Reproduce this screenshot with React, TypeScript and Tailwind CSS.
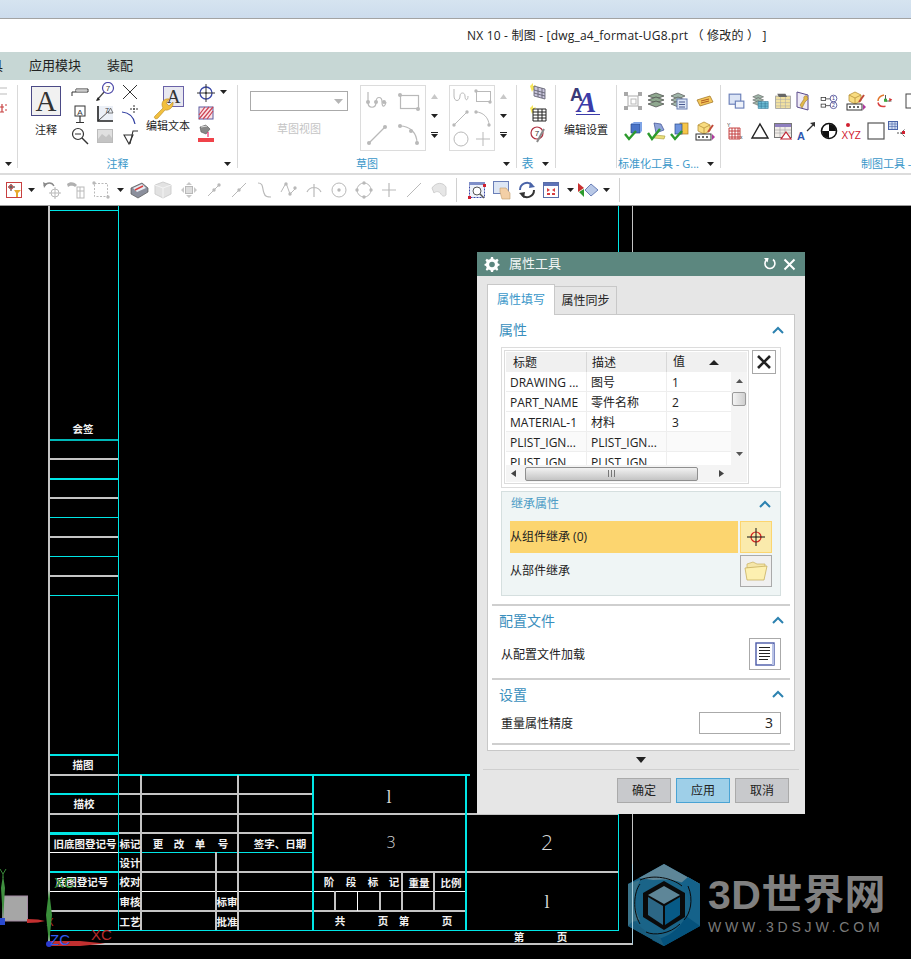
import React from 'react';

type Kids = { children?: React.ReactNode };

// --- small helpers ---
const Ic = ({ w = 20, h = 20, vb, children }: Kids & { w?: number; h?: number; vb?: string }) => (
  <svg width={w} height={h} viewBox={vb ?? `0 0 ${w} ${h}`} className="block shrink-0">
    {children}
  </svg>
);

const Drop = () => (
  <svg width="7" height="4" viewBox="0 0 7 4" className="block shrink-0">
    <polygon points="0,0 7,0 3.5,4" fill="#222" />
  </svg>
);

const Chevron = () => (
  <svg width="12" height="8" viewBox="0 0 12 8" className="block">
    <path d="M1 7 L6 2 L11 7" fill="none" stroke="#2c82b0" strokeWidth="2" />
  </svg>
);

const GRAY = '#b9b9b9';

// --- ribbon icons ---
const BigA = () => (
  <div className="w-[30px] h-[30px] border border-[#4b4a86] bg-[#f1f1f1] flex items-center justify-center font-['Liberation_Serif',serif] text-[29px] leading-none text-[#333]">
    A
  </div>
);
const LeaderNote = () => (
  <Ic>
    <path d="M2 14 V10 H18 V7 H6 V10" fill="none" stroke="#333" strokeWidth="1" />
    <path d="M6 8.5 H17" stroke="#ccc" strokeWidth="2" />
  </Ic>
);
const BalloonSeven = () => (
  <Ic>
    <path d="M2 18 L10 9" stroke="#444" strokeWidth="1.2" />
    <polygon points="1,19 3,15 5,18" fill="#222" />
    <circle cx="13" cy="6" r="5.5" fill="#fff" stroke="#4d48a8" strokeWidth="1.2" />
    <text x="13" y="9" fontSize="8" textAnchor="middle" fill="#333" fontFamily="Liberation Sans">7</text>
  </Ic>
);
const Cross = () => (
  <Ic>
    <path d="M3 3 L17 17 M17 3 L3 17" stroke="#333" strokeWidth="1" />
  </Ic>
);
const SignA = () => (
  <Ic>
    <rect x="5" y="2" width="10" height="10" fill="#fff" stroke="#333" />
    <text x="10" y="10.5" fontSize="8" textAnchor="middle" fill="#333" fontFamily="Liberation Sans">A</text>
    <path d="M10 12 V18 M6 18.5 H14" stroke="#333" strokeWidth="1.2" />
  </Ic>
);
const Slope = () => (
  <Ic>
    <rect x="2" y="2" width="16" height="16" fill="#dfe6f2" opacity="0.6" />
    <path d="M3 2 V17 H18" fill="none" stroke="#222" strokeWidth="1.6" />
    <path d="M4 16 L14 7" stroke="#555" strokeWidth="1" />
    <text x="10" y="9" fontSize="7" fill="#333" fontFamily="Liberation Sans">7</text>
    <polygon points="13,9 18,9 15.5,4" fill="none" stroke="#555" strokeWidth="0.8" />
  </Ic>
);
const Fillet = () => (
  <Ic>
    <path d="M2 8 Q13 9 15 20" fill="none" stroke="#2c3a9e" strokeWidth="1.2" />
    <path d="M14 1 V9 M10 5 H19" stroke="#333" strokeWidth="1" strokeDasharray="2 1" />
  </Ic>
);
const Loupe = () => (
  <Ic>
    <circle cx="8" cy="8" r="5.5" fill="#fff" stroke="#333" strokeWidth="1.2" />
    <path d="M5 8 H11" stroke="#333" />
    <path d="M12 12 L18 18" stroke="#333" strokeWidth="1.4" />
  </Ic>
);
const ImageGray = () => (
  <Ic>
    <rect x="2.5" y="3.5" width="15" height="13" fill="#e0e0e0" stroke="#bbb" />
    <path d="M3 13 L7 8 L11 11 L14 8 L17 12 V16 H3Z" fill="#c4c4c4" />
  </Ic>
);
const Surface = () => (
  <Ic>
    <path d="M4 9 H13 L9 18 Z" fill="none" stroke="#333" strokeWidth="1.1" />
    <path d="M10 18 L13 5 H18" fill="none" stroke="#333" strokeWidth="1.1" />
  </Ic>
);
const EditText = () => (
  <Ic w={44} h={34}>
    <rect x="17.5" y="0.5" width="20" height="20" fill="#e8e8f0" stroke="#6a62a8" />
    <text x="27.5" y="17" fontSize="19" textAnchor="middle" fill="#333" fontFamily="Liberation Serif">A</text>
    <path d="M9 30 L17 22 C14 17 18 12 23 13 L20 17 L23 20 L27 16 C28 21 23 25 19 24 L12 32 C10 34 7 32 9 30Z" fill="#f2c03e" stroke="#b98a24" strokeWidth="0.6" />
  </Ic>
);
const Target = () => (
  <Ic>
    <circle cx="10" cy="10" r="6" fill="none" stroke="#3a48a8" strokeWidth="1.3" />
    <path d="M10 1 V19 M1 10 H19" stroke="#333" strokeWidth="1" />
    <circle cx="10" cy="10" r="1" fill="#333" />
  </Ic>
);
const Hatch = () => (
  <Ic w={16} h={14}>
    <rect x="1" y="1" width="14" height="12" fill="#fbe3e6" stroke="#5a5aa0" />
    <path d="M1 9 L7 1 M1 13 L11 1 M5 13 L15 1 M9 13 L15 5" stroke="#cc4455" strokeWidth="1.2" />
  </Ic>
);
const Pour = () => (
  <Ic w={17} h={18}>
    <path d="M2 3 L8 1 L12 5 L8 10 L3 8Z" fill="#888" stroke="#555" strokeWidth="0.6" />
    <path d="M3 3 L9 2" stroke="#ddd" />
    <path d="M10 8 V13" stroke="#e05" strokeWidth="1" />
    <rect x="0" y="14" width="16" height="4" fill="#f0434a" />
  </Ic>
);
const GalleryCurve = ({ kind }: { kind: 'studio' | 'rect' | 'line' | 'arc' }) => (
  <Ic w={24} h={24}>
    <g fill="none" stroke={GRAY} strokeWidth="1.2">
      {kind === 'studio' && <path d="M3 2 V12 C3 19 11 19 11 12 C11 6 17 6 17 12 C17 18 20 17 21 12" />}
      {kind === 'rect' && <rect x="3.5" y="5.5" width="18" height="13" />}
      {kind === 'line' && <path d="M4 21 L20 5" />}
      {kind === 'arc' && <path d="M3 4 C13 4 20 11 20 21" />}
    </g>
    <g fill={GRAY}>
      {kind === 'studio' && (
        <>
          <circle cx="3" cy="12" r="2" />
          <circle cx="11" cy="12" r="2" />
          <circle cx="19" cy="12" r="2" />
        </>
      )}
      {kind === 'rect' && (
        <>
          <circle cx="3" cy="5" r="2" />
          <circle cx="21" cy="19" r="2" />
        </>
      )}
      {kind === 'line' && (
        <>
          <circle cx="4" cy="21" r="2" />
          <circle cx="20" cy="5" r="2" />
        </>
      )}
      {kind === 'arc' && (
        <>
          <circle cx="3" cy="4" r="2" />
          <circle cx="14" cy="9" r="2" />
          <circle cx="20" cy="21" r="2" />
        </>
      )}
    </g>
  </Ic>
);
const TableNew = ({ n }: { n: 0 | 1 }) => (
  <Ic w={18} h={18}>
    <polygon points="1,4 4,1 4,4 7,3 5,6 7,9 4,8 3,10 2,7" fill="#f7e65a" />
    {n === 0 ? (
      <path d="M5 4 L16 7 V17 L5 14Z M5 8 L16 11 M5 11 L16 14 M9 5 V15 M13 6 V16" fill="#c9c5dc" stroke="#5a5a6a" strokeWidth="0.8" />
    ) : (
      <path d="M4 5 H17 V17 H4Z M4 8 H17 M4 11 H17 M4 14 H17 M9 5 V17 M13 5 V17" fill="#fff" stroke="#222" strokeWidth="1" />
    )}
  </Ic>
);
const BalloonPen = () => (
  <Ic w={18} h={18}>
    <circle cx="8" cy="7" r="6" fill="#fff" stroke="#b03040" strokeWidth="1.2" />
    <text x="8" y="10" fontSize="8" textAnchor="middle" fill="#333" fontFamily="Liberation Sans">7</text>
    <path d="M15 3 L8 16" stroke="#8a8a8a" strokeWidth="2" />
  </Ic>
);
const DoubleA = () => (
  <div className="relative w-[32px] h-[32px] font-['Liberation_Serif',serif]">
    <span className="absolute left-0 top-0 text-[18px] leading-none font-bold font-['Liberation_Sans',sans-serif] text-[#3a3a78]">A</span>
    <span className="absolute left-[7px] top-[2px] text-[29px] leading-none italic font-bold text-[#3b3ba8]">A</span>
    <span className="absolute left-[6px] top-[28px] w-[24px] h-[1px] bg-[#3b3ba8]" />
  </div>
);

// --- standard tool icons (coloured) ---
const Stack = ({ c = '#8fa88f' }: { c?: string }) => (
  <Ic>
    {[5, 9, 13].map((y) => (
      <path key={y} d={`M10 ${y - 3} L18 ${y} L10 ${y + 3} L2 ${y}Z`} fill={c} stroke="#444" strokeWidth="0.7" />
    ))}
  </Ic>
);
const StackList = () => (
  <Ic>
    {[5, 9, 13].map((y) => (
      <path key={y} d={`M9 ${y - 3} L16 ${y} L9 ${y + 3} L2 ${y}Z`} fill="#9fb5a8" stroke="#555" strokeWidth="0.7" />
    ))}
    <rect x="8" y="8" width="10" height="10" fill="#dbe5f5" stroke="#6a7fb0" />
    <path d="M10 11 H16 M10 13.5 H16 M10 16 H16" stroke="#4a5a90" />
  </Ic>
);
const SelectCube = () => (
  <Ic>
    <rect x="5" y="5" width="10" height="10" fill="none" stroke={GRAY} strokeWidth="1.2" />
    <rect x="8" y="8" width="5" height="5" fill="none" stroke={GRAY} />
    {[3, 17].map((x) => [3, 17].map((y) => <rect key={`${x}-${y}`} x={x - 2} y={y - 2} width="4" height="4" fill="#a8a8a8" />))}
  </Ic>
);
const Tag = () => (
  <Ic>
    <path d="M2 9 L15 5 L18 11 L5 15Z" fill="#f3c65a" stroke="#a67a2a" strokeWidth="0.8" />
    <path d="M6 10 L14 8 M6 12 L14 10" stroke="#b05a20" />
  </Ic>
);
const BlueCheck = ({ c = '#4a74c8' }: { c?: string }) => (
  <Ic>
    <path d="M8 3 L17 3 L17 12 L8 12Z" fill={c} stroke="#2a4a8a" strokeWidth="0.7" />
    <path d="M8 3 L11 1 H19 L17 3Z M17 3 L19 1 V10 L17 12Z" fill="#7fa4e6" />
    <path d="M2 13 L6 18 L13 10" fill="none" stroke="#2c9a2c" strokeWidth="2.4" />
  </Ic>
);
const WrenchCheck = () => (
  <Ic>
    <path d="M8 2 L15 3 L18 9 L10 12Z" fill="#8fa4d8" stroke="#3a4a90" strokeWidth="0.7" />
    <path d="M9 14 L19 15 L18 18 L8 17Z" fill="#eadf7a" stroke="#a89a3a" strokeWidth="0.6" />
    <path d="M2 12 L6 18 L14 8" fill="none" stroke="#2c9a2c" strokeWidth="2.4" />
  </Ic>
);
const YellowCheck = () => (
  <Ic>
    <rect x="11" y="2" width="8" height="11" fill="#f6c64a" stroke="#a87a20" strokeWidth="0.7" />
    <rect x="6" y="3" width="7" height="10" fill="#6f94de" stroke="#2a4a8a" strokeWidth="0.7" />
    <path d="M2 13 L6 18 L13 10" fill="none" stroke="#2c9a2c" strokeWidth="2.4" />
  </Ic>
);
const CubePencil = () => (
  <Ic>
    <path d="M3 4 L9 1 L15 4 V10 L9 13 L3 10Z" fill="#f8dc80" stroke="#b8923a" strokeWidth="0.8" />
    <path d="M3 4 L9 7 L15 4 M9 7 V13" fill="none" stroke="#b8923a" strokeWidth="0.8" />
    <path d="M18 4 L13 11" stroke="#c04a3a" strokeWidth="2" />
    <rect x="1" y="13" width="15" height="6" fill="#fff" stroke="#333" />
    <path d="M3 16 H5 M7 16 H9 M11 16 H13" stroke="#333" strokeWidth="1.6" />
    <polygon points="17,13 20,16 17,19" fill="#b03aa0" />
  </Ic>
);
const TwoViews = () => (
  <Ic w={17} h={17} vb="0 0 22 22">
    <rect x="1.5" y="1.5" width="15" height="13" fill="#dbe4f5" stroke="#6a7fb8" strokeWidth="1.5" />
    <rect x="9.5" y="10.5" width="11" height="9" fill="#eef2fa" stroke="#6a7fb8" strokeWidth="1.5" />
  </Ic>
);
const StackTable = () => (
  <Ic w={17} h={17} vb="0 0 22 22">
    {[5, 9, 13].map((y) => (
      <path key={y} d={`M8 ${y - 3} L15 ${y} L8 ${y + 3} L1 ${y}Z`} fill="#9fb5a8" stroke="#555" strokeWidth="0.7" />
    ))}
    <path d="M8 11 H21 V20 H8Z M8 14 H21 M8 17 H21 M12 11 V20 M17 11 V20" fill="#6fc0d8" stroke="#2f6f90" strokeWidth="0.7" />
  </Ic>
);
const TableYellow = () => (
  <Ic w={18} h={18} vb="0 0 22 22">
    <rect x="2" y="5" width="18" height="15" fill="#f3e2a0" stroke="#999" />
    <path d="M2 9 H20 M2 13 H20 M2 17 H20 M8 5 V20 M14 5 V20" stroke="#aaa" strokeWidth="0.7" />
    <path d="M4 2 H14 L16 6 H6Z" fill="#666" />
  </Ic>
);
const BookWrench = () => (
  <Ic>
    <path d="M3 1 L14 4 V19 L3 16Z" fill="#efeaf7" stroke="#5a4a8a" />
    <path d="M6 14 L10 8 C9 6 11 4 13 5 L14 8 L11 11 L8 17Z" fill="#e2b94a" stroke="#8a6a2a" strokeWidth="0.5" />
  </Ic>
);
const NumberedNodes = () => (
  <Ic w={18} h={17} vb="0 0 24 22">
    <g fill="none" stroke="#333">
      <rect x="1.5" y="5.5" width="6" height="4" />
      <rect x="1.5" y="14.5" width="6" height="4" />
      <path d="M8 7.5 H14 M8 16.5 H14" />
      <circle cx="18" cy="7" r="4.5" stroke="#3a3a8a" />
      <circle cx="18" cy="16" r="4.5" stroke="#3a3a8a" />
    </g>
    <text x="18" y="9.5" fontSize="7" textAnchor="middle" fill="#3a3a8a" fontFamily="Liberation Sans">1</text>
    <text x="18" y="18.5" fontSize="7" textAnchor="middle" fill="#3a3a8a" fontFamily="Liberation Sans">2</text>
  </Ic>
);
const Triad = () => (
  <Ic w={18} h={18} vb="0 0 24 24">
    <path d="M4 12 C4 7 8 5 12 4" fill="none" stroke="#e2762c" strokeWidth="2" />
    <path d="M4 14 C5 19 9 20 14 19" fill="none" stroke="#d94040" strokeWidth="2" />
    <path d="M14 12 V4 M14 12 H22" stroke="#222" strokeWidth="1" />
    <rect x="12" y="9" width="4" height="4" fill="#3aa83a" />
    <polygon points="19,8 23,10 19,13" fill="#d03030" />
  </Ic>
);
const TableAxis = () => (
  <Ic w={18} h={20}>
    <text x="0" y="6" fontSize="5" fill="#333" fontFamily="Liberation Sans">Y</text>
    <path d="M2 7 H13 V18 H2Z M2 10 H13 M2 13 H13 M2 16 H13 M5 7 V18 M8 7 V18 M11 7 V18" fill="none" stroke="#c03030" strokeWidth="0.9" />
    <text x="13" y="18" fontSize="5" fill="#333" fontFamily="Liberation Sans">x</text>
  </Ic>
);
const Triangle = () => (
  <Ic>
    <polygon points="10,3 18,17 2,17" fill="none" stroke="#222" strokeWidth="1.4" />
  </Ic>
);
const TableDelta = () => (
  <Ic>
    <rect x="1.5" y="2.5" width="17" height="14" fill="#f1ede8" stroke="#777" />
    <rect x="2" y="3" width="16" height="3" fill="#8f7fbf" />
    <path d="M2 9 H18 M2 12 H18 M7 6 V16 M12 6 V16" stroke="#aaa" strokeWidth="0.7" />
    <polygon points="13,11 18,18 8,18" fill="#fff" stroke="#c02030" strokeWidth="1.2" />
  </Ic>
);
const ArrowA = () => (
  <Ic>
    <text x="1" y="19" fontSize="11" fontWeight="700" fill="#2f58b0" fontFamily="Liberation Sans">A</text>
    <path d="M11 10 L18 3" stroke="#333" strokeWidth="1.3" />
    <polygon points="19,1 19,6 14,2" fill="#333" />
  </Ic>
);
const Centroid = () => (
  <Ic>
    <circle cx="10" cy="10" r="7.5" fill="#fff" stroke="#111" strokeWidth="1.6" />
    <path d="M10 10 V3 A7 7 0 0 1 17 10Z M10 10 V17 A7 7 0 0 1 3 10Z" fill="#111" />
  </Ic>
);
const Xyz = () => (
  <Ic w={24} h={20}>
    <circle cx="7" cy="4" r="2" fill="#d02030" />
    <text x="0.5" y="18" fontSize="10" fill="#d02030" fontFamily="Liberation Sans">XYZ</text>
  </Ic>
);
const Square = () => (
  <Ic w={18} h={18}>
    <rect x="1" y="1" width="16" height="16" fill="#fff" stroke="#555" strokeWidth="1.2" />
  </Ic>
);
const TableNode = () => (
  <Ic w={22} h={20}>
    <rect x="1.5" y="0.5" width="9" height="8" fill="#cfdcf2" stroke="#4a64a8" />
    <path d="M2 3 H10 M2 5.5 H10 M5 1 V8 M8 1 V8" stroke="#4a64a8" strokeWidth="0.6" />
    <path d="M10 12 H14 L18 8 M14 12 L18 16" fill="none" stroke="#555" strokeDasharray="2 1" />
    <rect x="15" y="10" width="3" height="3" fill="#d02030" />
  </Ic>
);

// --- toolbar icons ---
const SelFilter = () => (
  <Ic w={16} h={16}>
    <rect x="0.5" y="0.5" width="15" height="15" fill="#fff" stroke="#c84040" />
    <path d="M5 2 V9 M2 5 H9" stroke="#333" />
    <circle cx="5" cy="5" r="2" fill="none" stroke="#c04040" />
    <polygon points="8,8 15,8 12,11 12,15 10,15 10,11" fill="#e6a92a" />
  </Ic>
);
const TB = ({ d, fill }: { d: string; fill?: string }) => (
  <Ic w={18} h={18}>
    <path d={d} fill={fill ?? 'none'} stroke={GRAY} strokeWidth="1.2" />
  </Ic>
);
const Dot = ({ x, y }: { x: number; y: number }) => <circle cx={x} cy={y} r="1.7" fill={GRAY} />;
const DashBox = () => (
  <Ic w={18} h={18}>
    <rect x="2.5" y="2.5" width="13" height="13" fill="none" stroke={GRAY} strokeDasharray="2 1.5" />
    <Dot x={2} y={2} />
    <Dot x={16} y={16} />
  </Ic>
);
const ColorCube = () => (
  <Ic>
    <path d="M2 8 L13 3 L19 8 L19 12 L9 18 L2 14Z" fill="#8b8f9c" stroke="#555" strokeWidth="0.7" />
    <path d="M4 8 L13 4 L17 8 L8 12Z" fill="#e6ecf4" />
    <path d="M6 10 L14 6" stroke="#d84040" strokeWidth="1.4" />
  </Ic>
);
const GrayCube = () => (
  <Ic>
    <path d="M2 5 L10 2 L18 5 V14 L10 18 L2 14Z" fill="#e2e2e2" stroke="#cfcfcf" />
    <path d="M2 5 L10 8 L18 5 M10 8 V18" fill="none" stroke="#f4f4f4" />
  </Ic>
);
const GrayCubeExp = () => (
  <Ic>
    <path d="M10 2 L13 5 H7Z M10 18 L13 15 H7Z M2 10 L5 7 V13Z M18 10 L15 7 V13Z" fill="#c8c8c8" />
    <rect x="6.5" y="6.5" width="7" height="7" fill="#ddd" stroke={GRAY} />
  </Ic>
);
const RotGray = () => (
  <Ic>
    <path d="M2 6 C5 2 10 2 12 6" fill="none" stroke="#8a8a8a" strokeWidth="1.3" />
    <polygon points="1,2 5,4 2,8" fill="#8a8a8a" />
    <path d="M13 7 V19 M7 13 H19" stroke={GRAY} />
    <circle cx="13" cy="13" r="4" fill="none" stroke={GRAY} />
  </Ic>
);
const PanGray = () => (
  <Ic>
    <path d="M1 4 C4 1 9 2 11 5 L9 7 C6 5 4 6 2 7Z" fill="#b0b0b0" />
    <rect x="11" y="7" width="7" height="11" fill="none" stroke={GRAY} />
    <path d="M11 11 H18 M14 7 V18" stroke={GRAY} />
  </Ic>
);
const ZoomFit = () => (
  <Ic w={18} h={18}>
    <rect x="1.5" y="1.5" width="15" height="15" fill="#eef2fa" stroke="#3a48a8" strokeDasharray="2 1" />
    <rect x="1" y="1" width="16" height="3" fill="#7f8fc8" />
    <circle cx="9" cy="10" r="4" fill="#fff" stroke="#555" />
    <path d="M12 13 L16 17" stroke="#555" strokeWidth="1.4" />
    <rect x="0" y="15" width="3" height="3" fill="#d02030" />
    <rect x="15" y="3" width="3" height="3" fill="#d02030" />
  </Ic>
);
const PanHand = () => (
  <Ic>
    <rect x="1.5" y="1.5" width="15" height="12" fill="#dde6f4" stroke="#6a7fb8" />
    <path d="M8 12 V8 H14 L18 13 V19 H10Z" fill="#f3cfa6" stroke="#c09a6a" strokeWidth="0.6" />
  </Ic>
);
const Refresh = () => (
  <Ic>
    <path d="M3 10 A7 7 0 0 1 15 5" fill="none" stroke="#4a64a8" strokeWidth="2" />
    <polygon points="13,2 18,7 12,8" fill="#4a64a8" />
    <path d="M17 10 A7 7 0 0 1 5 15" fill="none" stroke="#333" strokeWidth="2" />
    <polygon points="7,18 2,13 8,12" fill="#333" />
  </Ic>
);
const FitView = () => (
  <Ic w={16} h={16}>
    <rect x="0.5" y="0.5" width="15" height="15" fill="#fff" stroke="#5a6ea8" />
    <rect x="1" y="1" width="14" height="3" fill="#5f74b8" />
    <path d="M4 6 L7 8 L4 10Z M12 6 L9 8 L12 10Z M4 11 H7 V13 H4Z M9 11 H12 V13 H9Z" fill="#d84040" />
  </Ic>
);
const ShowHide = () => (
  <Ic w={22} h={18}>
    <polygon points="1,2 7,7 1,11" fill="#c83030" />
    <polygon points="2,11 7,8 7,16" fill="#2c9a2c" />
    <path d="M8 9 L14 3 L21 9 L14 15Z" fill="#b8c8e6" stroke="#6a7fb8" />
  </Ic>
);

// --- ribbon group shell ---
function Group({ w, label, dd, labelClass, children }: Kids & { w: string; label?: string; dd?: boolean; labelClass?: string }) {
  return (
    <div className={`${w} h-full shrink-0 flex flex-col relative`}>
      <div className="h-[75px] flex items-start">{children}</div>
      <div className="flex-1 flex items-center min-w-0">
        <div className={labelClass ?? 'flex-1 text-center text-[#3a97c9] text-[11px] whitespace-nowrap'}>{label}</div>
        {dd && (
          <div className="w-[20px] flex justify-center">
            <Drop />
          </div>
        )}
      </div>
    </div>
  );
}
const Sep = () => <div className="w-px my-[5px] shrink-0 bg-[#d9d9d9]" />;
const Cell = ({ children, w = 'w-[25px]', h = 'h-[22px]' }: Kids & { w?: string; h?: string }) => (
  <div className={`${w} ${h} flex items-center justify-center shrink-0`}>{children}</div>
);
const Label = ({ children, className = '' }: Kids & { className?: string }) => (
  <div className={`text-[11px] leading-[14px] text-[#222] text-center whitespace-nowrap ${className}`}>{children}</div>
);

function ScrollArrows({ ml }: { ml: string }) {
  return (
    <div className={`${ml} flex flex-col items-center w-[10px] gap-[15px] pt-[14px]`}>
      <svg width="7" height="5" viewBox="0 0 7 5"><polygon points="0,5 7,5 3.5,0" fill="#c8c8c8" /></svg>
      <Drop />
      <div className="flex flex-col items-center gap-[1px] -mt-[1px]">
        <div className="w-[7px] h-[1px] bg-[#222]" />
        <Drop />
      </div>
    </div>
  );
}

function Ribbon() {
  return (
    <div className="h-[93px] flex bg-white overflow-hidden">
      <Group w="w-[17px]" dd labelClass="w-0">
        <div className="pt-[5px] pl-0 flex flex-col gap-[4px]">
          <Ic w={8} h={14}><path d="M0 3 H7 M0 9 H7" stroke="#bbb" /></Ic>
          <Ic w={8} h={12}><path d="M0 4 H4 M5 2 H7 M5 7 H7 M2 1 V9 M0 9 H4" stroke="#c84040" strokeWidth="1.2" /></Ic>
        </div>
      </Group>
      <Sep />
      <Group w="w-[219px]" label="注释" dd>
        <div className="pl-[13px] pt-[6px] flex flex-col items-center w-[43px] shrink-0">
          <BigA />
          <Label className="mt-[7px]">注释</Label>
        </div>
        <div className="grid grid-cols-3 ml-[6px] pt-[1px] w-[75px] shrink-0">
          <Cell><LeaderNote /></Cell><Cell><BalloonSeven /></Cell><Cell><Cross /></Cell>
          <Cell><SignA /></Cell><Cell><Slope /></Cell><Cell><Fillet /></Cell>
          <Cell><Loupe /></Cell><Cell><ImageGray /></Cell><Cell><Surface /></Cell>
        </div>
        <div className="w-[52px] pt-[6px] flex flex-col items-center shrink-0">
          <EditText />
          <Label className="-mt-[1px]">编辑文本</Label>
        </div>
        <div className="flex flex-col items-center w-[24px] pt-[2px] gap-[1px] shrink-0">
          <Cell h="h-[21px]"><Target /></Cell>
          <Cell h="h-[18px]"><Hatch /></Cell>
          <Cell h="h-[20px]"><Pour /></Cell>
        </div>
        <div className="pt-[10px] pl-[2px]"><Drop /></div>
      </Group>
      <Sep />
      <Group w="w-[278px]" label="草图" dd>
        <div className="ml-[12px] mt-[11px] w-[98px] shrink-0">
          <div className="h-[20px] border border-[#aaa] flex items-center justify-end pr-[4px]">
            <svg width="9" height="5" viewBox="0 0 9 5"><polygon points="0,0 9,0 4.5,5" fill="#b5b5b5" /></svg>
          </div>
          <Label className="mt-[11px] !text-[#c4c4c4]">草图视图</Label>
        </div>
        <div className="ml-[12px] mt-[5px] w-[66px] h-[66px] border border-[#dcdcdc] grid grid-cols-2 place-items-center shrink-0">
          <GalleryCurve kind="studio" />
          <GalleryCurve kind="rect" />
          <GalleryCurve kind="line" />
          <GalleryCurve kind="arc" />
        </div>
        <ScrollArrows ml="ml-[3px]" />
        <div className="ml-[10px] mt-[5px] w-[46px] h-[66px] border border-[#dcdcdc] grid grid-cols-2 grid-rows-3 place-items-center shrink-0 overflow-hidden">
          <Ic w={18} h={18}><path d="M2 1 V8 C2 14 8 14 8 8 C8 4 13 4 13 8 C13 13 16 13 16 8" fill="none" stroke={GRAY} /></Ic>
          <Ic w={18} h={18}><rect x="2.5" y="3.5" width="14" height="10" fill="none" stroke={GRAY} /><Dot x={2} y={3} /><Dot x={16} y={14} /></Ic>
          <Ic w={18} h={18}><path d="M2 16 L15 3" stroke={GRAY} /><Dot x={2} y={16} /><Dot x={15} y={3} /></Ic>
          <Ic w={18} h={18}><path d="M2 3 C9 3 15 9 15 16" fill="none" stroke={GRAY} /><Dot x={2} y={3} /><Dot x={15} y={16} /></Ic>
          <Ic w={18} h={18}><circle cx="9" cy="9" r="7" fill="none" stroke={GRAY} /></Ic>
          <Ic w={18} h={18}><path d="M9 2 V16 M2 9 H16" stroke={GRAY} /></Ic>
        </div>
        <ScrollArrows ml="ml-[3px]" />
      </Group>
      <Sep />
      <Group w="w-[38px]" label="表" dd labelClass="flex-1 pl-[3px] text-center text-[#3a97c9] text-[12px]">
        <div className="flex flex-col items-center w-full pl-[3px] pt-[2px] gap-[4px]">
          <TableNew n={0} />
          <TableNew n={1} />
          <BalloonPen />
        </div>
      </Group>
      <Sep />
      <Group w="w-[60px]">
        <div className="w-full pt-[6px] flex flex-col items-center">
          <DoubleA />
          <Label className="mt-[5px]">编辑设置</Label>
        </div>
      </Group>
      <Sep />
      <Group w="w-[103px]" label="标准化工具 - G..." dd labelClass="flex-1 pl-[1px] text-[#3a97c9] text-[11px] whitespace-nowrap">
        <div className="grid grid-cols-[23px_23px_23px_29px] pt-[6px] pl-[4px]">
          <Cell w="w-[23px]" h="h-[30px]"><SelectCube /></Cell>
          <Cell w="w-[23px]" h="h-[30px]"><Stack /></Cell>
          <Cell w="w-[23px]" h="h-[30px]"><StackList /></Cell>
          <Cell w="w-[29px]" h="h-[30px]"><Tag /></Cell>
          <Cell w="w-[23px]" h="h-[30px]"><BlueCheck /></Cell>
          <Cell w="w-[23px]" h="h-[30px]"><WrenchCheck /></Cell>
          <Cell w="w-[23px]" h="h-[30px]"><YellowCheck /></Cell>
          <Cell w="w-[29px]" h="h-[30px]"><CubePencil /></Cell>
        </div>
      </Group>
      <Sep />
      <Group w="w-[191px]" label="制图工具 -" labelClass="pl-[140px] text-[#3a97c9] text-[11px] whitespace-nowrap">
        <div className="flex flex-col pt-[6px] pl-[4px]">
          <div className="flex h-[30px] items-center">
            <Cell w="w-[23px]" h="h-[30px]"><TwoViews /></Cell>
            <Cell w="w-[24px]" h="h-[30px]"><StackTable /></Cell>
            <Cell w="w-[22px]" h="h-[30px]"><TableYellow /></Cell>
            <Cell w="w-[20px]" h="h-[30px]"><BookWrench /></Cell>
            <Cell w="w-[30px]" h="h-[30px]"><NumberedNodes /></Cell>
            <Cell w="w-[24px]" h="h-[30px]"><CubePencil /></Cell>
            <Cell w="w-[32px]" h="h-[30px]"><Triad /></Cell>
            <Cell w="w-[20px]" h="h-[30px]"><Ic w={10} h={20}><rect x="1" y="3" width="14" height="14" fill="none" stroke="#444" /></Ic></Cell>
          </div>
          <div className="flex h-[30px] items-center">
            <Cell w="w-[22px]" h="h-[30px]"><TableAxis /></Cell>
            <Cell w="w-[25px]" h="h-[30px]"><Triangle /></Cell>
            <Cell w="w-[21px]" h="h-[30px]"><TableDelta /></Cell>
            <Cell w="w-[25px]" h="h-[30px]"><ArrowA /></Cell>
            <Cell w="w-[22px]" h="h-[30px]"><Centroid /></Cell>
            <Cell w="w-[25px]" h="h-[30px]"><Xyz /></Cell>
            <Cell w="w-[21px]" h="h-[30px]"><Square /></Cell>
            <Cell w="w-[24px]" h="h-[30px]"><TableNode /></Cell>
          </div>
        </div>
      </Group>
    </div>
  );
}

function Toolbar() {
  const T = ({ children, w = 'w-[25px]' }: Kids & { w?: string }) => <Cell w={w} h="h-[30px]">{children}</Cell>;
  return (
    <div className="h-[33px] shrink-0 border-t-2 border-b border-t-[#dcdcdc] border-b-[#9a9a9a] bg-white flex items-center">
      <div className="w-[6px]" />
      <T w="w-[16px]"><SelFilter /></T>
      <T w="w-[18px]"><Drop /></T>
      <T w="w-[24px]"><RotGray /></T>
      <T w="w-[24px]"><PanGray /></T>
      <T><DashBox /></T>
      <T w="w-[14px]"><Drop /></T>
      <T w="w-[23px]"><ColorCube /></T>
      <T w="w-[26px]"><GrayCube /></T>
      <T><GrayCubeExp /></T>
      <T><Ic w={18} h={18}><path d="M3 15 L15 3" stroke={GRAY} /><Dot x={9} y={9} /><Dot x={14} y={4} /></Ic></T>
      <T><Ic w={18} h={18}><path d="M2 16 L16 2" stroke={GRAY} /><Dot x={9} y={9} /></Ic></T>
      <T><TB d="M3 2 C9 2 7 8 9 12 C10 16 13 16 16 16" /></T>
      <T><Ic w={18} h={18}><path d="M1 11 L6 2 L10 13 L16 7" fill="none" stroke={GRAY} /><Dot x={6} y={3} /><Dot x={10} y={13} /><Dot x={15} y={7} /></Ic></T>
      <T><TB d="M2 11 C5 5 13 5 16 11 M9 3 V16" /></T>
      <T><Ic w={18} h={18}><circle cx="9" cy="9" r="7" fill="none" stroke={GRAY} /><Dot x={9} y={9} /></Ic></T>
      <T><Ic w={18} h={18}><circle cx="9" cy="9" r="7" fill="none" stroke={GRAY} /><Dot x={9} y={2} /><Dot x={9} y={16} /><Dot x={2} y={9} /><Dot x={16} y={9} /></Ic></T>
      <T><TB d="M9 2 V16 M2 9 H16" /></T>
      <T><Ic w={18} h={18}><path d="M2 16 L16 2" stroke={GRAY} /></Ic></T>
      <T><Ic w={18} h={18}><path d="M2 7 C6 1 13 1 16 6 V14 C14 16 12 15 11 13 C9 10 6 10 4 12Z" fill="#e6e6e6" stroke="#cfcfcf" /></Ic></T>
      <div className="w-[5px]" />
      <div className="w-px h-[24px] bg-[#d0d0d0]" />
      <div className="w-[8px]" />
      <T w="w-[24px]"><ZoomFit /></T>
      <T w="w-[26px]"><PanHand /></T>
      <T w="w-[24px]"><Refresh /></T>
      <T w="w-[24px]"><FitView /></T>
      <T w="w-[14px]"><Drop /></T>
      <T w="w-[22px]"><ShowHide /></T>
      <T w="w-[14px]"><Drop /></T>
      <div className="w-[6px]" />
      <div className="w-px h-[24px] bg-[#d0d0d0]" />
    </div>
  );
}

// --- CAD sheet ---
const CY = '#00e6e6';
const GR = '#c4c4c4';
// [y, x1, x2, colour, width]
const HLINES: [number, number, number, string, number][] = [
  [210, 49, 118, CY, 1], [440, 49, 118, '#00b8b8', 2], [459, 49, 118, GR, 2], [479, 49, 118, CY, 2],
  [498, 49, 118, GR, 2], [517.5, 49, 118, CY, 1], [537, 49, 118, GR, 2], [556.5, 49, 118, CY, 1],
  [576, 49, 118, GR, 2], [595.5, 49, 118, CY, 1], [755, 49, 118, CY, 2], [775, 49, 118, GR, 2],
  [775, 118, 470, CY, 2], [794, 49, 118, CY, 2], [794, 118, 313, GR, 2], [814, 49, 313, GR, 2],
  [814, 313, 618, GR, 2], [833, 49, 118, CY, 3], [833, 118, 313, GR, 2], [852.5, 49, 118, '#ffffff', 1],
  [852.5, 118, 313, CY, 1], [872, 49, 118, CY, 2], [872, 118, 313, GR, 2], [872, 313, 618, GR, 2],
  [891.5, 49, 313, '#ffffff', 1], [891.5, 313, 466, '#ffffff', 1], [911, 49, 466, GR, 2], [930.5, 49, 618, CY, 1],
  [944, 49, 632, GR, 1.5],
];
// [x, y1, y2, colour, width]
const VLINES: [number, number, number, string, number][] = [
  [49, 206, 945, GR, 2], [118.5, 206, 931, CY, 1], [141, 775, 930, GR, 2], [238, 775, 930, GR, 2],
  [216, 852, 930, GR, 2], [313, 775, 930, CY, 2], [466, 775, 930, CY, 2], [618.5, 206, 931, CY, 1.5],
  [632.5, 206, 945, GR, 1.5], [335, 891, 911, GR, 2], [357.5, 891, 911, '#ffffff', 1], [380, 891, 911, GR, 2],
  [401.5, 872, 911, GR, 2], [434, 872, 911, GR, 2],
];
// [text, x, y] – x is the middle of the text
const LABELS: [string, number, number][] = [
  ['会签', 83, 429], ['描图', 83, 765], ['描校', 84, 804], ['旧底图登记号', 85, 844], ['标记', 130, 844],
  ['更', 158, 844], ['改', 179, 844], ['单', 200, 844], ['号', 223, 844], ['签字、日期', 280, 844],
  ['设计', 130, 863], ['校对', 130, 882], ['审核', 130, 902], ['工艺', 130, 922], ['底图登记号', 82, 882],
  ['标审', 227, 902], ['批准', 227, 922], ['阶', 329, 882], ['段', 351, 882], ['标', 373, 882], ['记', 394, 882],
  ['重量', 419, 883], ['比例', 451, 883], ['共', 340, 921], ['页', 383, 921], ['第', 404, 921], ['页', 447, 921],
  ['第', 519, 937], ['页', 562, 937],
];

function Sheet() {
  return (
    <svg width="911" height="753" viewBox="0 206 911 753" className="block" shapeRendering="crispEdges">
      {HLINES.map(([y, a, b, c, s], i) => <line key={`h${i}`} x1={a} x2={b} y1={y} y2={y} stroke={c} strokeWidth={s} />)}
      {VLINES.map(([x, a, b, c, s], i) => <line key={`v${i}`} x1={x} x2={x} y1={a} y2={b} stroke={c} strokeWidth={s} />)}
      <g shapeRendering="auto" fill="#f2f2f2" fontFamily="Noto Sans CJK SC, sans-serif" fontWeight="700" fontSize="10.5" textAnchor="middle">
        {LABELS.map(([t, x, y], i) => <text key={`t${i}`} x={x} y={y + 4}>{t}</text>)}
      </g>
      <g shapeRendering="auto" fill="#d8d8d8" fontFamily="Open Sans, sans-serif" fontWeight="300" textAnchor="middle">
        <text x="389" y="803" fontSize="18" fontFamily="Liberation Serif, serif">l</text>
        <text x="391" y="848" fontSize="16">3</text>
        <text x="547" y="850" fontSize="21">2</text>
        <text x="547" y="908" fontSize="18" fontFamily="Liberation Serif, serif">l</text>
      </g>
      {/* 坐标系 */}
      <g shapeRendering="auto">
        <rect x="2.5" y="896" width="25" height="25" fill="#a6a6a6" stroke="#a28aa2" />
        <path d="M3 921 L1 888 L3 875 L5 888Z" fill="#3f8f3f" />
        <path d="M0 869 L3 874 L6 869 M3 874 V878" fill="none" stroke="#3a8a3a" />
        <path d="M27 919 L38 919.5 L45 921 L38 922.5 L27 923Z" fill="#c43030" />
        <rect x="0" y="918" width="5" height="7" fill="#2a4ad0" />
        <text x="50" y="926" fontSize="11" fill="#b52a2a" textAnchor="middle" fontFamily="Liberation Sans, sans-serif">X</text>
        <path d="M49 890 L52 915 L49 944 L46 915Z" fill="#3a8f3a" />
        <path d="M49 941 L80 941 L105 943.5 L80 946 L49 946Z" fill="#c23030" />
        <circle cx="49" cy="944" r="3" fill="#2a3ad0" />
        <text x="50" y="945" fontSize="15" fill="#2f5cf0" fontFamily="Liberation Sans, sans-serif">ZC</text>
        <text x="91" y="940" fontSize="15" fill="#b52a2a" fontFamily="Liberation Sans, sans-serif">XC</text>
        <text x="54" y="888" fontSize="15" fill="#2a8a2a" fontFamily="Liberation Sans, sans-serif">XC</text>
      </g>
    </svg>
  );
}

function Logo() {
  return (
    <div className="absolute left-[628px] top-[658px] flex items-start">
      <svg width="72" height="82" viewBox="0 0 72 82" className="block shrink-0">
        <polygon points="36,0 72,20 72,62 36,82 0,62 0,20" fill="#1a6488" />
        <path d="M36 0 L72 20 L66 27 C58 17 42 14 25 16 L11 14Z" fill="#5e8698" />
        <path d="M72 20 V62 L60 55 C64 42 62 32 52 20 L60 13Z" fill="#15628a" />
        <path d="M72 62 L36 82 L24 76 C38 74 50 68 58 52Z" fill="#05527c" />
        <path d="M36 82 L0 62 L2 50 C8 60 18 70 32 73Z" fill="#1a5d7e" />
        <path d="M0 62 V20 L12 16 C6 28 4 40 12 56 L4 58Z" fill="#3a7389" />
        <path d="M12 16 C26 10 44 14 54 22 M60 22 C66 36 62 50 56 56 M52 60 C42 70 26 72 18 68 M12 60 C4 46 6 28 12 20" fill="none" stroke="#0a0a0a" strokeWidth="1" />
        <polygon points="36,17 57,29 57,53 36,66 15,53 15,29" fill="#0a0a0a" />
        <polygon points="36,22 52,31 36,40 20,31" fill="#5e8698" />
        <polygon points="20,33 35,42 35,61 20,51" fill="#2c6786" />
        <polygon points="37,42 52,33 52,51 37,61" fill="#075a86" />
        <path d="M4.5 0 V80" stroke="#a9cfdf" strokeWidth="1" />
      </svg>
      <div className="ml-[8px] flex flex-col">
        <div className="mt-[10px] h-[42px] flex items-center text-[41px] leading-none font-bold tracking-[0.5px] text-[#808080] font-['Liberation_Sans','Noto_Sans_CJK_SC',sans-serif] whitespace-nowrap">
          3D世界网
        </div>
        <div className="mt-[5px] text-[14px] leading-[12px] tracking-[3.8px] text-[#7a7a7a] font-['Liberation_Sans',sans-serif] whitespace-nowrap">
          WWW.3DSJW.COM
        </div>
      </div>
    </div>
  );
}

// --- dialog ---
const Blue = ({ children }: Kids) => <span className="text-[14px] text-[#3a8fbd]">{children}</span>;

function SectionHead({ title, className = '' }: { title: string; className?: string }) {
  return (
    <div className={`flex items-center justify-between pr-[10px] pl-[11px] ${className}`}>
      <Blue>{title}</Blue>
      <Chevron />
    </div>
  );
}

const ROWS = [
  ['DRAWING ...', '图号', '1'],
  ['PART_NAME', '零件名称', '2'],
  ['MATERIAL-1', '材料', '3'],
  ['PLIST_IGN...', 'PLIST_IGN...', ''],
  ['PLIST_IGN...', 'PLIST_IGN...', ''],
];

function PropTable() {
  return (
    <div className="mx-[13px] h-[141px] border border-[#dcdcdc] flex pl-[2px] pt-[2px]">
      <div className="w-[245px] h-[134px] border border-[#dcdcdc] p-px shrink-0">
        <div className="h-[20px] flex bg-[#f0f0f0] text-[12px] leading-[22px] text-[#222]">
          <div className="w-[81px] pl-[7px] border-r border-[#d8d8d8]">标题</div>
          <div className="w-[80px] pl-[5px] border-r border-[#d8d8d8]">描述</div>
          <div className="flex-1 pl-[6px] flex items-center">
            值
            <svg width="10" height="5" viewBox="0 0 10 5" className="ml-[24px]"><polygon points="0,5 10,5 5,0" fill="#222" /></svg>
          </div>
        </div>
        <div className="flex h-[93px]">
          <div className="w-[225px] overflow-hidden">
            {ROWS.map((r, i) => (
              <div key={i} className={`h-[20px] shrink-0 flex text-[12px] leading-[21px] text-[#222] border-b border-[#eeeeee] ${i === 3 ? 'bg-[#fafafa]' : 'bg-white'}`}>
                <div className="w-[81px] pl-[4px] border-r border-[#eeeeee] whitespace-nowrap overflow-hidden">{r[0]}</div>
                <div className="w-[80px] pl-[4px] border-r border-[#eeeeee] whitespace-nowrap overflow-hidden">{r[1]}</div>
                <div className="flex-1 pl-[5px]">{r[2]}</div>
              </div>
            ))}
          </div>
          <div className="flex-1 bg-[#f4f4f4] flex flex-col items-center">
            <svg width="7" height="4" viewBox="0 0 7 4" className="mt-[7px]"><polygon points="0,4 7,4 3.5,0" fill="#555" /></svg>
            <div className="w-[14px] h-[14px] mt-[9px] border border-[#9a9a9a] rounded-[2px] bg-gradient-to-r from-[#f4f4f4] to-[#cfcfcf]" />
            <svg width="7" height="4" viewBox="0 0 7 4" className="mt-[46px]"><polygon points="0,0 7,0 3.5,4" fill="#555" /></svg>
          </div>
        </div>
        <div className="h-[17px] flex items-center bg-[#f4f4f4]">
          <svg width="5" height="7" viewBox="0 0 5 7" className="ml-[5px]"><polygon points="5,0 5,7 0,3.5" fill="#444" /></svg>
          <div className="ml-[9px] w-[173px] h-[14px] border border-[#8f8f8f] rounded-[2px] bg-gradient-to-b from-[#f2f2f2] to-[#c4c4c4] flex items-center justify-center">
            <div className="w-[7px] h-[7px] border-x border-[#777] relative">
              <div className="absolute left-[2px] top-0 w-px h-full bg-[#777]" />
            </div>
          </div>
          <svg width="5" height="7" viewBox="0 0 5 7" className="ml-[21px]"><polygon points="0,0 0,7 5,3.5" fill="#444" /></svg>
        </div>
      </div>
      <div className="ml-[3px] w-[24px] h-[24px] border border-[#a8a8a8] bg-white flex items-center justify-center">
        <svg width="16" height="16" viewBox="0 0 16 16"><path d="M2 2 L14 14 M14 2 L2 14" stroke="#222" strokeWidth="2.6" /></svg>
      </div>
    </div>
  );
}

function Inherit() {
  return (
    <div className="mx-[13px] mt-[3px] h-[105px] border border-[#d5dfdf] bg-[#eff5f5] pl-[8px] pr-[8px]">
      <div className="h-[24px] flex items-center justify-between pl-[1px] pr-[1px]">
        <span className="text-[12px] text-[#4d9dc6]">继承属性</span>
        <Chevron />
      </div>
      <div className="mt-[5px] flex items-center gap-[2px]">
        <div className="w-[228px] h-[32px] bg-[#fcd56f] flex items-center text-[12px] text-[#222]">从组件继承 (0)</div>
        <div className="w-[32px] h-[32px] bg-[#faeaac] border border-[#fcd56f] flex items-center justify-center">
          <svg width="20" height="20" viewBox="0 0 20 20">
            <circle cx="10" cy="10" r="5" fill="none" stroke="#d42020" strokeWidth="1.2" />
            <path d="M10 1 V19 M1 10 H19" stroke="#111" strokeWidth="1" />
          </svg>
        </div>
      </div>
      <div className="mt-[2px] flex items-center gap-[2px]">
        <div className="w-[228px] text-[12px] text-[#222]">从部件继承</div>
        <div className="w-[32px] h-[32px] bg-[#f0f0f0] border border-[#aaaaaa] flex items-center justify-center">
          <svg width="24" height="22" viewBox="0 0 24 22">
            <path d="M3 4 L9 2 L13 4 L21 4 L21 8 L3 8Z" fill="#f5e6a8" stroke="#c8b060" strokeWidth="0.7" />
            <path d="M1 8 L23 6 L20 20 L3 20Z" fill="#fdf0b0" stroke="#c8b060" strokeWidth="0.8" />
          </svg>
        </div>
      </div>
    </div>
  );
}

const Divider = () => <div className="mx-[4px] h-[2px] bg-[#cfcfcf]" />;

function Dialog() {
  return (
    <div className="absolute left-[477px] top-[46px] w-[328px] h-[562px] bg-[#e6e6e6] flex flex-col">
      <div className="h-[24px] bg-[#5c877f] flex items-center text-white">
        <svg width="16" height="16" viewBox="0 0 16 16" className="ml-[7px]">
          <path d="M7 1 H9 L9.5 3 L11.5 3.8 L13.2 2.8 L14.6 4.2 L13.4 6 L14 7.5 L15.5 8 V9.5 L14 10 L13.3 11.8 L14.3 13.4 L13 14.7 L11.3 13.6 L9.5 14.3 L9 16 H7 L6.5 14.3 L4.7 13.6 L3 14.7 L1.7 13.4 L2.7 11.8 L2 10 L0.5 9.5 V8 L2 7.5 L2.6 6 L1.4 4.2 L2.8 2.8 L4.5 3.8 L6.5 3Z" fill="#fff" />
          <circle cx="8" cy="8.5" r="2.8" fill="#5c877f" />
        </svg>
        <span className="ml-[9px] text-[13px] text-[#f2f6f5]">属性工具</span>
        <svg width="14" height="14" viewBox="0 0 14 14" className="ml-auto">
          <path d="M3.5 2.8 A5 5 0 1 0 10 2.5" fill="none" stroke="#fff" strokeWidth="1.6" />
          <polygon points="1,1 5.6,1 4.5,5.5" fill="#fff" />
        </svg>
        <svg width="13" height="13" viewBox="0 0 13 13" className="ml-[6px] mr-[9px]">
          <path d="M1.5 1.5 L11.5 11.5 M11.5 1.5 L1.5 11.5" stroke="#fff" strokeWidth="2" />
        </svg>
      </div>

      <div className="flex-1 flex flex-col px-[10px] pt-[8px]">
        <div className="flex items-end h-[31px] relative z-10 -mb-px">
          <div className="w-[68px] h-[31px] bg-white border border-b-0 border-[#c8c8c8] flex items-center justify-center text-[12px] text-[#3a97c9]">属性填写</div>
          <div className="w-[62px] h-[29px] bg-[#e6e6e6] border border-l-0 border-[#c8c8c8] border-b-[#c8c8c8] flex items-center justify-center text-[12px] text-[#222]">属性同步</div>
        </div>
        <div className="w-[308px] h-[437px] bg-white border border-[#c8c8c8]">
          <SectionHead title="属性" className="h-[29px]" />
          <div className="h-[3px]" />
          <PropTable />
          <Inherit />
          <div className="h-[8px]" />
          <Divider />
          <SectionHead title="配置文件" className="h-[28px] mb-[2px]" />
          <div className="h-[2px]" />
          <div className="h-[32px] flex items-center justify-between pl-[13px] pr-[13px]">
            <span className="text-[12px] text-[#222] pt-[1px]">从配置文件加载</span>
            <div className="w-[32px] h-[32px] border border-[#aaaaaa] bg-white flex items-center justify-center">
              <svg width="20" height="24" viewBox="0 0 20 24">
                <rect x="1" y="1" width="18" height="22" fill="#fff" stroke="#4a5aa8" strokeWidth="1.4" />
                <rect x="17" y="2" width="2" height="21" fill="#b9c3e6" />
                <path d="M4 5.5 H15 M4 8.5 H15 M4 11.5 H15 M4 14.5 H15 M4 17.5 H13" stroke="#222" strokeWidth="1" />
              </svg>
            </div>
          </div>
          <div className="h-[8px]" />
          <Divider />
          <SectionHead title="设置" className="h-[28px] mb-[2px]" />
          <div className="h-[2px]" />
          <div className="h-[22px] flex items-center justify-between pl-[13px] pr-[13px]">
            <span className="text-[12px] text-[#222] pt-[2px]">重量属性精度</span>
            <div className="w-[82px] h-[22px] border border-[#aaaaaa] bg-white text-right pr-[7px] text-[14px] leading-[20px] text-[#222]">3</div>
          </div>
          <div className="h-[9px]" />
          <Divider />
        </div>
        <div className="h-[18px] flex items-center justify-center">
          <svg width="10" height="6" viewBox="0 0 10 6"><polygon points="0,0 10,0 5,6" fill="#222" /></svg>
        </div>
        <div className="-mx-[4px] h-px bg-[#cfcfcf]" />
        <div className="mt-[8px] flex justify-end gap-[5px] pr-[6px]">
          <button className="w-[54px] h-[25px] bg-[#c8c9cc] border border-[#aaaaaa] text-[12px] text-[#222]">确定</button>
          <button className="w-[54px] h-[25px] bg-[#9ecfe8] border border-[#4aa3d4] text-[12px] text-[#222]">应用</button>
          <button className="w-[54px] h-[25px] bg-[#c8c9cc] border border-[#aaaaaa] text-[12px] text-[#222]">取消</button>
        </div>
      </div>
    </div>
  );
}

export default function App() {
  return (
    <div className="w-[911px] h-[959px] overflow-hidden flex flex-col bg-black font-['Open_Sans','Noto_Sans_CJK_SC',sans-serif]">
      <div className="h-[19px] shrink-0 bg-gradient-to-b from-[#d6e4f0] to-[#cddced] border-b border-[#a3a3a3]" />
      <div className="h-[33px] shrink-0 bg-white pl-[467px] pt-px flex items-center text-[12px] tracking-[0.2px] text-[#222]">
        NX 10 - 制图 - [dwg_a4_format-UG8.prt （ 修改的 ） ]
      </div>
      <div className="h-[28px] shrink-0 bg-[#c7d7d5] flex items-center gap-[26px] text-[13px] text-[#222] -ml-[10px]">
        <span>具</span>
        <span>应用模块</span>
        <span>装配</span>
      </div>
      <Ribbon />
      <Toolbar />
      <div className="relative flex-1 bg-black">
        <Sheet />
        <Dialog />
        <Logo />
      </div>
    </div>
  );
}
